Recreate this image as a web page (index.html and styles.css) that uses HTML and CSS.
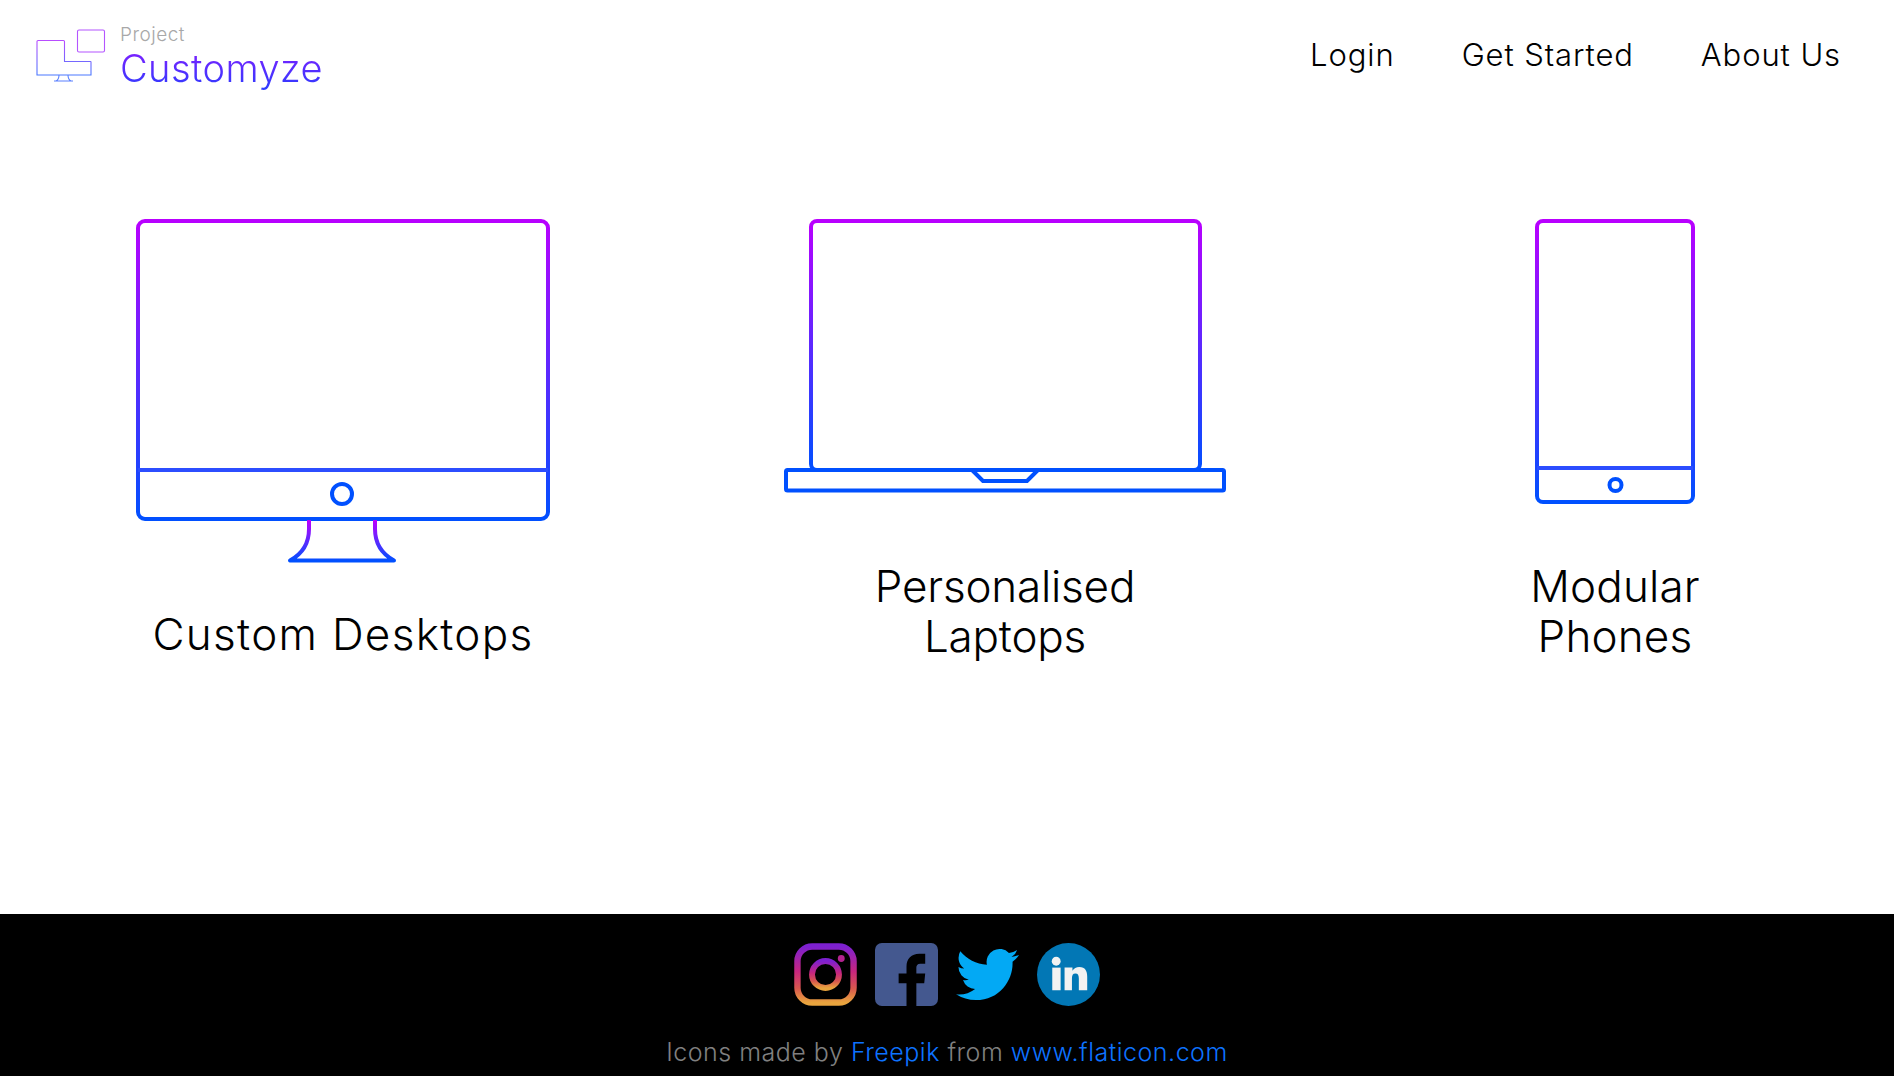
FILE: index.html
```html
<!DOCTYPE html>
<html lang="en">
<head>
  <meta charset="UTF-8">
  <meta name="viewport" content="width=device-width, initial-scale=1.0">
  <title>Project Customyze</title>
  <link rel="stylesheet" href="styles.css">
</head>
<body>
  <div class="page">
    <header class="header">
      <a class="brand" href="#">
        <svg class="brand-logo" viewBox="0 0 70 54" width="70" height="54" fill="none">
          <defs>
            <linearGradient id="logo-grad" x1="0" y1="0" x2="0" y2="1">
              <stop offset="0" stop-color="#b84dff"/>
              <stop offset="1" stop-color="#4a78ff"/>
            </linearGradient>
          </defs>
          <path stroke="url(#logo-grad)" stroke-width="1.1" d="M2 11.500h25.500a1 1 0 0 1 1 1V32.500H54.500a.5.5 0 0 1 .5.5V46H1V12.500a1 1 0 0 1 1-1z"/>
          <path stroke="#5a80ff" stroke-width="1.1" d="M18 52h19M23 46c0 3-1 5-3 6M32 46c0 3 1 5 3 6"/>
          <rect x="41.500" y="1" width="27" height="22" rx="1.500" stroke="#b455ff" stroke-width="1.100"/>
        </svg>
        <span class="brand-text">
          <span class="brand-project">Project</span>
          <span class="brand-name">Customyze</span>
        </span>
      </a>
      <nav class="nav">
        <a href="#">Login</a>
        <a href="#">Get Started</a>
        <a href="#">About Us</a>
      </nav>
    </header>

    <main class="devices">
      <section class="device device-desktop">
        <svg viewBox="0 0 414 344" width="414" height="344" fill="none" stroke-width="4">
          <defs>
            <linearGradient id="screen-grad" gradientUnits="userSpaceOnUse" x1="0" y1="0" x2="0" y2="302">
              <stop offset="0" stop-color="#b900ff"/>
              <stop offset="1" stop-color="#0050ff"/>
            </linearGradient>
            <linearGradient id="stand-grad" gradientUnits="userSpaceOnUse" x1="0" y1="302" x2="0" y2="342">
              <stop offset="0" stop-color="#b900ff"/>
              <stop offset="1" stop-color="#0050ff"/>
            </linearGradient>
          </defs>
          <rect x="2" y="2" width="410" height="298" rx="7" stroke="url(#screen-grad)"/>
          <path d="M2 251H412" stroke="#2c4dff"/>
          <circle cx="206" cy="275" r="10" stroke="#0050ff"/>
          <path d="M173 301v9c0 15-7 25-19 31.500h104c-12-6.500-19-16.500-19-31.500v-9" stroke="url(#stand-grad)" stroke-linejoin="round"/>
        </svg>
        <h2 class="device-title">Custom Desktops</h2>
      </section>

      <section class="device device-laptop">
        <svg viewBox="0 0 442 276" width="442" height="276" fill="none" stroke-width="4">
          <defs>
            <linearGradient id="lid-grad" gradientUnits="userSpaceOnUse" x1="0" y1="2" x2="0" y2="252">
              <stop offset="0" stop-color="#b900ff"/>
              <stop offset="1" stop-color="#0050ff"/>
            </linearGradient>
          </defs>
          <path d="M33 251a6 6 0 0 1-6-6V8a6 6 0 0 1 6-6H410a6 6 0 0 1 6 6V245a6 6 0 0 1-6 6" stroke="url(#lid-grad)"/>
          <rect x="2" y="251" width="438" height="20.500" rx="1.500" stroke="#0050ff"/>
          <path d="M188 251l11 11h44l11-11" stroke="#0050ff"/>
        </svg>
        <h2 class="device-title">Personalised<br>Laptops</h2>
      </section>

      <section class="device device-phone">
        <svg viewBox="0 0 160 285" width="160" height="285" fill="none" stroke-width="4">
          <defs>
            <linearGradient id="phone-grad" gradientUnits="userSpaceOnUse" x1="0" y1="2" x2="0" y2="283">
              <stop offset="0" stop-color="#b900ff"/>
              <stop offset="1" stop-color="#0050ff"/>
            </linearGradient>
          </defs>
          <rect x="2" y="2" width="156" height="281" rx="6" stroke="url(#phone-grad)"/>
          <path d="M2 249H158" stroke="#2c4dff"/>
          <circle cx="80.500" cy="266" r="6" stroke="#0050ff"/>
        </svg>
        <h2 class="device-title">Modular<br>Phones</h2>
      </section>
    </main>

    <footer class="footer">
      <div class="social">
        <a href="#" aria-label="Instagram">
          <svg viewBox="0 0 64 64" width="63" height="63" fill="none">
            <defs>
              <linearGradient id="ig-grad" x1="0" y1="0" x2="0" y2="1">
                <stop offset="0" stop-color="#7d20d0"/>
                <stop offset=".45" stop-color="#c8267e"/>
                <stop offset=".75" stop-color="#d8584e"/>
                <stop offset="1" stop-color="#e9a43e"/>
              </linearGradient>
            </defs>
            <rect x="3.500" y="3.500" width="57" height="57" rx="15" stroke="url(#ig-grad)" stroke-width="6.500"/>
            <circle cx="32" cy="32" r="13.700" stroke="url(#ig-grad)" stroke-width="6"/>
            <circle cx="48" cy="15.700" r="3.500" fill="#b3238f"/>
          </svg>
        </a>
        <a href="#" aria-label="Facebook">
          <svg viewBox="0 0 64 64" width="63" height="63">
            <rect width="64" height="64" rx="7" fill="#44588f"/>
            <path fill="#000" d="M32 64V41H24V31H32V24C32 16 37 11 45 11H51V21H46C43 21 42 23 42 25V31H51L50 41H42V64Z"/>
          </svg>
        </a>
        <a href="#" aria-label="Twitter">
          <svg viewBox="0 0 24 24" width="63" height="63">
            <path fill="#03a9f4" d="M23.953 4.570a10 10 0 0 1-2.825.775 4.958 4.958 0 0 0 2.163-2.723c-.951.555-2.005.959-3.127 1.184a4.920 4.920 0 0 0-8.384 4.482C7.690 8.095 4.067 6.130 1.640 3.162a4.822 4.822 0 0 0-.666 2.475c0 1.710.870 3.213 2.188 4.096a4.904 4.904 0 0 1-2.228-.616v.060a4.923 4.923 0 0 0 3.946 4.827 4.996 4.996 0 0 1-2.212.085 4.936 4.936 0 0 0 4.604 3.417 9.867 9.867 0 0 1-6.102 2.105c-.390 0-.779-.023-1.170-.067a13.995 13.995 0 0 0 7.557 2.209c9.053 0 13.998-7.496 13.998-13.985 0-.210 0-.420-.015-.630A9.935 9.935 0 0 0 24 4.590z"/>
          </svg>
        </a>
        <a href="#" aria-label="LinkedIn">
          <svg viewBox="0 0 64 64" width="63" height="63">
            <circle cx="32" cy="32" r="32" fill="#0277b5"/>
            <g fill="#f2f2f2">
              <circle cx="19.500" cy="18.500" r="4.500"/>
              <rect x="15.500" y="25" width="8.500" height="23"/>
              <path d="M28 25h8v3.200c1.400-2.300 4-3.800 7-3.800 6 0 8 4 8 10V48h-8.500V36c0-3-.8-5-3.500-5s-3.500 2-3.500 5V48H28z"/>
            </g>
          </svg>
        </a>
      </div>
      <p class="credit">Icons made by <a href="#">Freepik</a> from <a href="#">www.flaticon.com</a></p>
    </footer>
  </div>
</body>
</html>
```

FILE: styles.css
```css
body {
  margin: 0;
  font-family: Inter, "Open Sans", sans-serif;
  font-weight: 300;
  background-color: #fff;
  color: #000;
}
a {
  text-decoration: none;
  color: inherit;
}
.page {
  min-height: 100vh;
  display: flex;
  flex-direction: column;
}

/* header */
.header {
  display: flex;
  justify-content: space-between;
  align-items: flex-start;
  padding: 28px 53px 0 36px;
  height: 190px;
  box-sizing: border-box;
}
.brand {
  display: flex;
  align-items: flex-start;
  gap: 14px;
}
.brand-logo {
  margin-top: 1px;
}
.brand-text {
  display: flex;
  flex-direction: column;
  margin-top: -4px;
}
.brand-project {
  font-size: 19px;
  line-height: 22px;
  letter-spacing: .5px;
  color: #a8a8a8;
}
.brand-name {
  font-size: 38px;
  line-height: 44px;
  letter-spacing: .45px;
  background-image: linear-gradient(#8a1cff, #2a3cff);
  -webkit-background-clip: text;
  background-clip: text;
  color: transparent;
}
.nav {
  display: flex;
  gap: 67px;
  font-size: 31px;
  line-height: 54px;
  letter-spacing: .9px;
}

/* device row */
.devices {
  flex: 1;
  display: flex;
  padding-left: 136px;
  padding-bottom: 253px;
  min-height: 0;
}
.device {
  display: flex;
  flex-direction: column;
  align-items: center;
  justify-content: space-between;
  margin-top: 29px;
}
.device svg {
  display: block;
}
.device-laptop {
  margin-left: 234px;
}
.device-phone {
  width: 160px;
  margin-left: 309px;
}
.device-title {
  margin: 0;
  font-size: 44px;
  font-weight: 300;
  line-height: 50px;
  text-align: center;
}
.device-desktop .device-title {
  margin-bottom: 2px;
  letter-spacing: 1.3px;
}
.device-laptop .device-title {
  letter-spacing: -.2px;
}
.device-phone .device-title {
  letter-spacing: .2px;
}

/* footer */
.footer {
  height: 162px;
  box-sizing: border-box;
  background-color: #000;
  padding-top: 29px;
  text-align: center;
}
.social {
  display: flex;
  justify-content: center;
  gap: 18px;
}
.social svg {
  display: block;
}
.credit {
  margin: 28px 0 0;
  font-size: 25px;
  line-height: 36px;
  letter-spacing: .5px;
  color: #808080;
}
.credit a {
  color: #0d72ff;
}
```
